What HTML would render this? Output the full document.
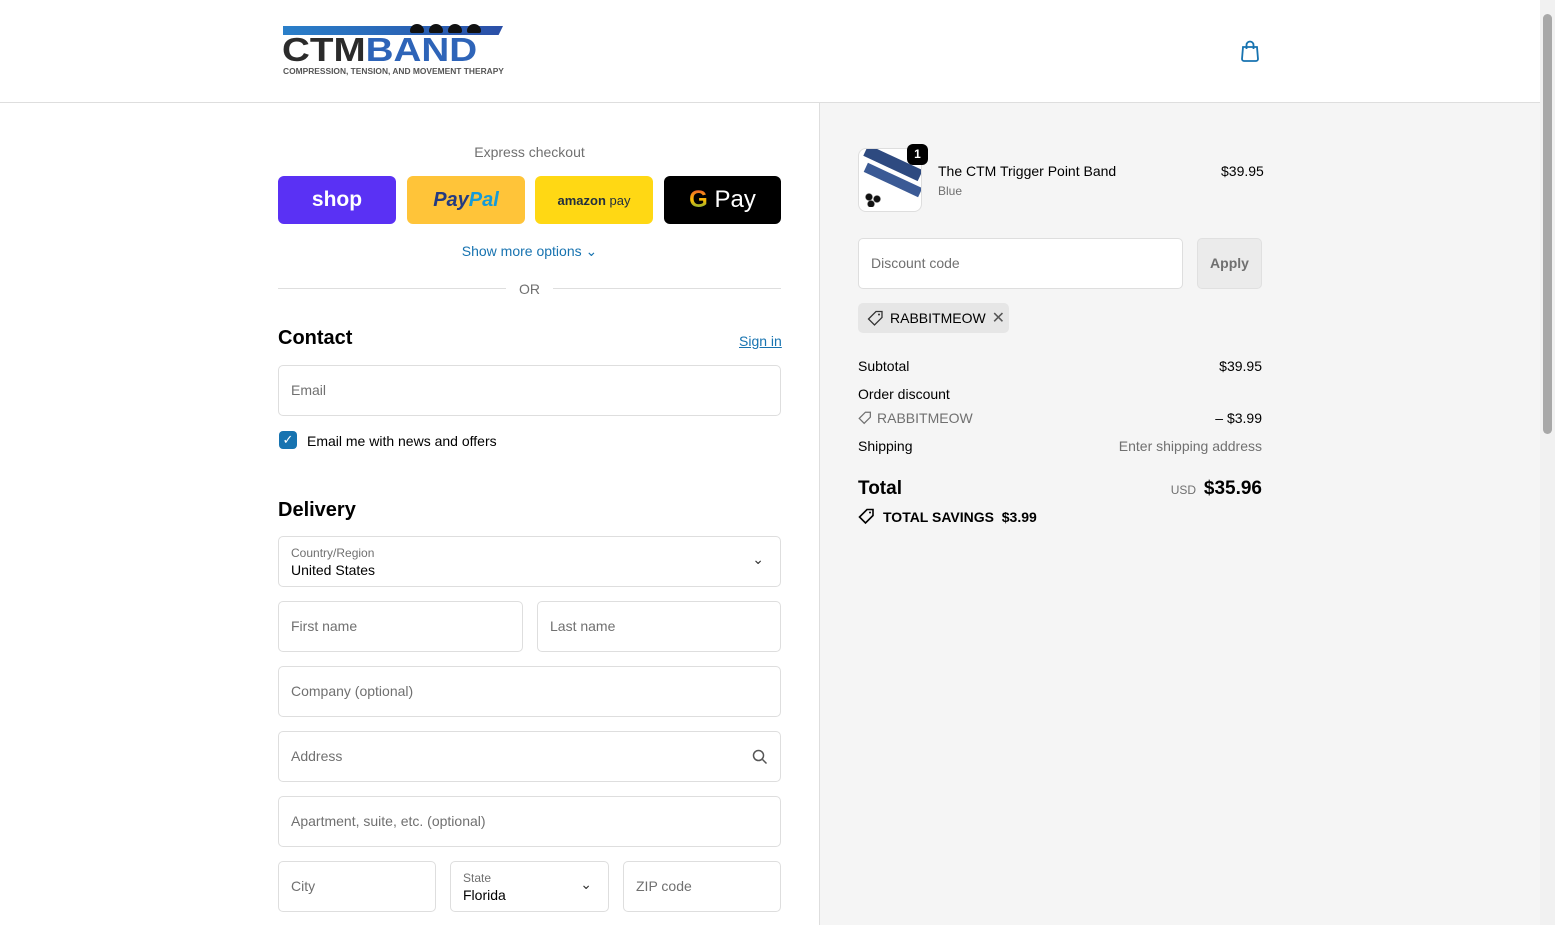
<!DOCTYPE html>
<html><head><meta charset="utf-8"><style>
*{box-sizing:border-box;margin:0;padding:0}
body{width:1555px;height:925px;overflow:hidden;font-family:"Liberation Sans",sans-serif;color:#000;background:#fff;position:relative;font-size:14px}
.abs{position:absolute}
.hdr{left:0;top:0;width:1540px;height:103px;border-bottom:1px solid #dedede;background:#fff}
.right{left:819px;top:103px;width:721px;height:822px;background:#f5f5f5;border-left:1px solid #dedede}
.sb{left:1540px;top:0;width:15px;height:925px;background:#f1f1f1}
.thumb{left:1543px;top:14px;width:9px;height:420px;background:#a8a8a8;border-radius:5px}
.inp{position:absolute;border:1px solid #dedede;border-radius:5px;background:#fff;height:51px;color:#707070;font-size:14px;padding-left:12px;line-height:49px}
.btn{position:absolute;top:176px;height:48px;width:118px;border-radius:6px;display:flex;align-items:center;justify-content:center}
h2{font-size:20px;font-weight:bold;position:absolute}
.row{position:absolute;left:858px;width:404px;font-size:14px;display:flex;justify-content:space-between}
</style></head><body>
<div class="abs hdr">
 <div class="abs" style="left:283px;top:26px;width:220px;height:9px;background:linear-gradient(90deg,#2a7fc9,#2b4fa7);clip-path:polygon(0 0,100% 0,98% 100%,0 100%)"></div>
 <div class="abs" style="left:410px;top:24px;display:flex;gap:5px"><span style="width:14px;height:9px;background:#111;border-radius:7px 7px 2px 2px"></span><span style="width:14px;height:9px;background:#111;border-radius:7px 7px 2px 2px"></span><span style="width:14px;height:9px;background:#111;border-radius:7px 7px 2px 2px"></span><span style="width:14px;height:9px;background:#111;border-radius:7px 7px 2px 2px"></span></div>
 <div class="abs" style="left:282px;top:35px;font-size:33px;font-weight:900;line-height:30px;transform:scaleX(1.17);transform-origin:left"><span style="color:#2b2b2b">CTM</span><span style="color:#2e64b8">BAND</span></div>
 <div class="abs" style="left:283px;top:67px;font-size:8px;font-weight:bold;color:#555;white-space:nowrap;transform:scaleX(1.05);transform-origin:left">COMPRESSION, TENSION, AND MOVEMENT THERAPY</div>
 <svg class="abs" style="left:1240px;top:40px" width="20" height="22" viewBox="0 0 20 22"><path d="M3 7h14l1 12a2 2 0 0 1-2 2H4a2 2 0 0 1-2-2z" fill="none" stroke="#1773b0" stroke-width="1.8"/><path d="M6.5 9V5a3.5 3.5 0 0 1 7 0v4" fill="none" stroke="#1773b0" stroke-width="1.8"/></svg>
</div>
<div class="abs right"></div>
<div class="abs sb"></div><div class="abs thumb"></div>

<div class="abs" style="left:278px;top:144px;width:503px;text-align:center;color:#707070;font-size:14px">Express checkout</div>
<div class="btn" style="left:278px;background:#5a31f4;color:#fff;font-size:21px;font-weight:bold">shop</div>
<div class="btn" style="left:407px;background:#ffc439;font-size:20px;font-weight:bold;font-style:italic"><span style="color:#253b80">Pay</span><span style="color:#179bd7">Pal</span></div>
<div class="btn" style="left:535px;background:#ffd814;font-size:13px;color:#232f3e"><b>amazon</b>&nbsp;pay</div>
<div class="btn" style="left:664px;width:117px;background:#000;color:#fff;font-size:24px"><span style="font-weight:bold;background:linear-gradient(#ea4335,#fbbc05 50%,#34a853);-webkit-background-clip:text;color:transparent">G</span>&nbsp;Pay</div>
<div class="abs" style="left:278px;top:243px;width:503px;text-align:center;color:#1773b0;font-size:14px">Show more options ⌄</div>
<div class="abs" style="left:278px;top:288px;width:228px;border-top:1px solid #dedede"></div>
<div class="abs" style="left:553px;top:288px;width:228px;border-top:1px solid #dedede"></div>
<div class="abs" style="left:519px;top:281px;color:#707070">OR</div>

<h2 style="left:278px;top:327px">Contact</h2>
<div class="abs" style="left:739px;top:333px;color:#1773b0;text-decoration:underline">Sign in</div>
<div class="inp" style="left:278px;top:365px;width:503px">Email</div>
<div class="abs" style="left:279px;top:431px;width:18px;height:18px;background:#1773b0;border-radius:4px;color:#fff;font-size:13px;text-align:center;line-height:18px">✓</div>
<div class="abs" style="left:307px;top:433px">Email me with news and offers</div>

<h2 style="left:278px;top:499px">Delivery</h2>
<div class="inp" style="left:278px;top:536px;width:503px;line-height:normal;color:#000"><div style="font-size:12px;color:#707070;margin-top:9px">Country/Region</div><div style="margin-top:2px">United States</div><span style="position:absolute;right:16px;top:14px;color:#333">⌄</span></div>
<div class="inp" style="left:278px;top:601px;width:245px">First name</div>
<div class="inp" style="left:537px;top:601px;width:244px">Last name</div>
<div class="inp" style="left:278px;top:666px;width:503px">Company (optional)</div>
<div class="inp" style="left:278px;top:731px;width:503px">Address<svg style="position:absolute;right:12px;top:17px" width="16" height="16" viewBox="0 0 16 16"><circle cx="6.5" cy="6.5" r="5" fill="none" stroke="#555" stroke-width="1.5"/><path d="M10.5 10.5l4 4" stroke="#555" stroke-width="1.5"/></svg></div>
<div class="inp" style="left:278px;top:796px;width:503px">Apartment, suite, etc. (optional)</div>
<div class="inp" style="left:278px;top:861px;width:158px">City</div>
<div class="inp" style="left:450px;top:861px;width:159px;line-height:normal;color:#000"><div style="font-size:12px;color:#707070;margin-top:9px">State</div><div style="margin-top:2px">Florida</div><span style="position:absolute;right:16px;top:14px;color:#333">⌄</span></div>
<div class="inp" style="left:623px;top:861px;width:158px">ZIP code</div>

<div class="abs" style="left:858px;top:148px;width:64px;height:64px;border:1px solid #dedede;border-radius:8px;background:#fff;overflow:hidden">
 <div class="abs" style="left:4px;top:8px;width:60px;height:12px;background:#2e4a80;transform:rotate(25deg)"></div>
 <div class="abs" style="left:4px;top:26px;width:60px;height:10px;background:#3b5a95;transform:rotate(25deg)"></div>
 <div class="abs" style="left:6px;top:44px;width:20px;height:14px;background:radial-gradient(circle at 4px 4px,#111 3px,transparent 4px),radial-gradient(circle at 12px 6px,#111 3px,transparent 4px),radial-gradient(circle at 6px 11px,#111 3px,transparent 4px)"></div>
</div>
<div class="abs" style="left:907px;top:144px;width:21px;height:21px;background:#000;color:#fff;border-radius:6px;font-size:12px;font-weight:bold;text-align:center;line-height:21px">1</div>
<div class="abs" style="left:938px;top:163px">The CTM Trigger Point Band</div>
<div class="abs" style="left:938px;top:184px;font-size:12px;color:#707070">Blue</div>
<div class="abs" style="left:1221px;top:163px">$39.95</div>
<div class="inp" style="left:858px;top:238px;width:325px">Discount code</div>
<div class="abs" style="left:1197px;top:238px;width:65px;height:51px;background:#ebebeb;border:1px solid #e0e0e0;border-radius:5px;color:#707070;text-align:center;line-height:49px;font-weight:bold">Apply</div>
<div class="abs" style="left:858px;top:303px;width:151px;height:30px;background:#e6e6e6;border-radius:5px;padding-left:32px;line-height:30px;color:#000;white-space:nowrap">RABBITMEOW<span style="margin-left:6px;color:#555;font-size:16px">✕</span></div>
<svg class="abs" style="left:867px;top:310px" width="17" height="17" viewBox="0 0 17 17"><path d="M9 1.5h6v6l-7.5 7.5-6-6z" fill="none" stroke="#333" stroke-width="1.3"/><circle cx="12" cy="4.5" r="1" fill="#333"/></svg>
<div class="row" style="top:358px"><span>Subtotal</span><span>$39.95</span></div>
<div class="row" style="top:386px"><span>Order discount</span></div>
<div class="row" style="top:410px;color:#707070"><span style="padding-left:19px">RABBITMEOW</span><span style="color:#000">– $3.99</span></div>
<svg class="abs" style="left:858px;top:411px" width="14" height="14" viewBox="0 0 17 17"><path d="M9 1.5h6v6l-7.5 7.5-6-6z" fill="none" stroke="#707070" stroke-width="1.5"/></svg>
<div class="row" style="top:438px"><span>Shipping</span><span style="color:#707070">Enter shipping address</span></div>
<div class="row" style="top:478px;align-items:baseline"><span style="font-size:19px;font-weight:bold">Total</span><span><span style="font-size:12px;color:#707070">USD</span>&nbsp; <b style="font-size:19px">$35.96</b></span></div>
<svg class="abs" style="left:858px;top:508px" width="17" height="17" viewBox="0 0 17 17"><path d="M9 1.5h6v6l-7.5 7.5-6-6z" fill="none" stroke="#000" stroke-width="1.6"/><circle cx="12" cy="4.5" r="1" fill="#000"/></svg>
<div class="abs" style="left:883px;top:509px;font-weight:bold;font-size:14px">TOTAL SAVINGS &nbsp;$3.99</div>
</body></html>
